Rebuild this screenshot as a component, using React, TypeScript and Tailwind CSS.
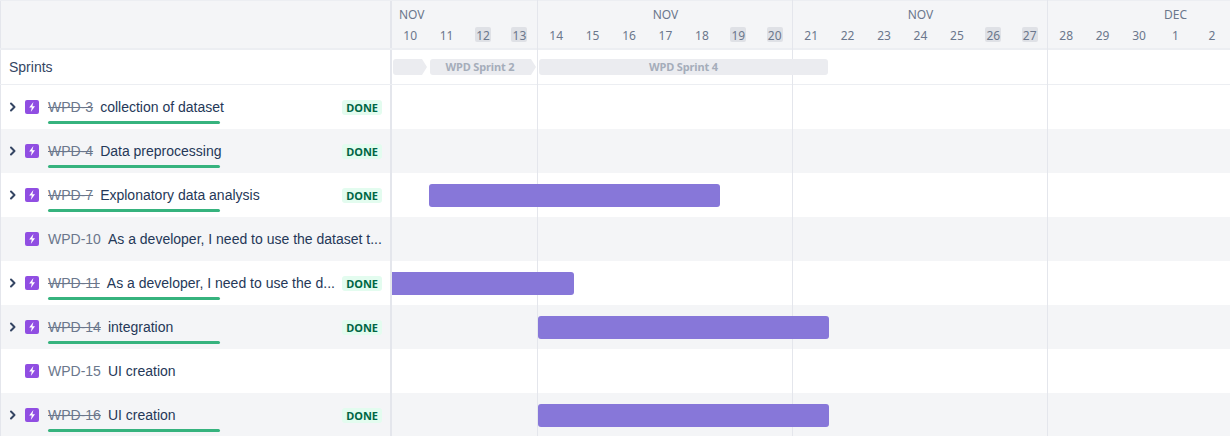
const months = [
  { label: 'NOV', cell: 'w-[146px]', labelCell: 'pl-[7px] text-left', days: ['10', '11', '12', '13'], weekend: ['12', '13'] },
  { label: 'NOV', cell: 'w-[255px]', labelCell: 'text-center', days: ['14', '15', '16', '17', '18', '19', '20'], weekend: ['19', '20'] },
  { label: 'NOV', cell: 'w-[255px]', labelCell: 'text-center', days: ['21', '22', '23', '24', '25', '26', '27'], weekend: ['26', '27'] },
  { label: 'DEC', cell: 'w-[255px]', labelCell: 'text-center', days: ['28', '29', '30', '1', '2'], weekend: [] as string[] },
];

type Task = {
  key: string;
  title: string;
  done: boolean;
  bar?: string;
};

const tasks: Task[] = [
  { key: 'WPD-3', title: 'collection of dataset', done: true },
  { key: 'WPD-4', title: 'Data preprocessing', done: true },
  { key: 'WPD-7', title: 'Explonatory data analysis', done: true, bar: 'ml-[37px] w-[291px] rounded-[3px]' },
  { key: 'WPD-10', title: 'As a developer, I need to use the dataset t...', done: false },
  { key: 'WPD-11', title: 'As a developer, I need to use the d...', done: true, bar: 'ml-0 w-[182px] rounded-r-[3px]' },
  { key: 'WPD-14', title: 'integration', done: true, bar: 'ml-[146px] w-[291px] rounded-[3px]' },
  { key: 'WPD-15', title: 'UI creation', done: false },
  { key: 'WPD-16', title: 'UI creation', done: true, bar: 'ml-[146px] w-[291px] rounded-[3px]' },
];

function StoryIcon() {
  return (
    <span className="flex h-[14px] w-[14px] shrink-0 items-center justify-center rounded-[2px] bg-[#904ee2]">
      <svg width="10" height="12" viewBox="0 0 10 12">
        <path d="M6.4 1 2.2 6.5h2.6l-1 4.5 4.2-5.8H5.4z" fill="#fff" />
      </svg>
    </span>
  );
}

function Chevron() {
  return (
    <svg width="8" height="10" viewBox="0 0 8 10" className="shrink-0">
      <path d="M2 1.5 5.5 5 2 8.5" fill="none" stroke="#344563" strokeWidth="2" strokeLinecap="round" strokeLinejoin="round" />
    </svg>
  );
}

function TaskRow({ task, shaded }: { task: Task; shaded: boolean }) {
  return (
    <div className={`flex h-[44px] ${shaded ? 'bg-[#f4f5f7]' : 'bg-white'}`}>
      <div className="relative flex w-[392px] shrink-0 items-center border-r-2 border-l border-[#e4e6ec] pr-[8px] pl-[8px]">
        <div className="flex w-[16px] justify-start">{task.done && <Chevron />}</div>
        <StoryIcon />
        <div className="ml-[9px] flex min-w-0 flex-1 items-center whitespace-nowrap text-[14px] leading-[20px]">
          <span className={`mr-[7px] text-[#6b778c] ${task.done ? 'line-through' : ''}`}>{task.key}</span>
          <span className="text-[#253858]">{task.title}</span>
        </div>
        {task.done && (
          <span className="mt-[1px] ml-auto h-[15px] rounded-[3px] bg-[#e3fcef] px-[4px] font-['Noto_Sans',sans-serif] text-[11px] leading-[16px] font-bold text-[#006644]">
            DONE
          </span>
        )}
        {task.done && <div className="absolute bottom-[5px] left-[47px] h-[3px] w-[172px] rounded-full bg-[#36b37e]" />}
      </div>
      <div className="flex-1 pt-[11px]">
        {task.bar && <div className={`relative z-10 h-[23px] bg-[#8777d9] ${task.bar}`} />}
      </div>
    </div>
  );
}

export default function App() {
  return (
    <div className="relative h-[436px] w-[1230px] overflow-hidden bg-white font-['Liberation_Sans',sans-serif]">
      <div className="flex h-[50px] border-t border-b-2 border-[#eceef2] bg-[#f4f5f7] font-['Noto_Sans',sans-serif]">
        <div className="w-[392px] shrink-0 border-r-2 border-l border-[#e4e6ec]" />
        <div className="flex flex-1 overflow-hidden">
          {months.map((month, i) => (
            <div key={i} className={`flex shrink-0 flex-col ${month.cell}`}>
              <div className={`pt-[6px] text-[12px] leading-[16px] text-[#6b778c] ${month.labelCell}`}>{month.label}</div>
              <div className="mt-[4px] flex">
                {month.days.map((day) => (
                  <div key={day} className="flex w-[36.43px] justify-center text-[12px] text-[#6b778c]">
                    <span className={`h-[15px] w-[16px] rounded-[2px] text-center leading-[17px] ${month.weekend.includes(day) ? 'bg-[#dfe1e6]' : ''}`}>{day}</span>
                  </div>
                ))}
              </div>
            </div>
          ))}
        </div>
      </div>

      <div className="flex h-[35px] border-b border-[#eceef2] bg-white">
        <div className="flex w-[392px] shrink-0 items-center border-r-2 border-l border-[#e4e6ec] pl-[8px] text-[14px] text-[#344563]">
          Sprints
        </div>
        <div className="flex flex-1 items-center pl-[1px] font-['Noto_Sans',sans-serif] text-[11px] font-bold tracking-[-0.15px] text-[#a5adba]">
          <div className="relative z-10 h-[16px] w-[34px] rounded-l-[3px] bg-[#ebecf0] [clip-path:polygon(0_0,29px_0,100%_50%,29px_100%,0_100%)]" />
          <div className="relative z-10 ml-[3px] flex h-[16px] w-[106px] items-center justify-center rounded-l-[3px] bg-[#ebecf0] pr-[6px] [clip-path:polygon(0_0,101px_0,100%_50%,101px_100%,0_100%)]">
            WPD Sprint 2
          </div>
          <div className="relative z-10 ml-[3px] flex h-[16px] w-[289px] items-center justify-center rounded-[3px] bg-[#ebecf0]">WPD Sprint 4</div>
        </div>
      </div>

      {tasks.map((task, i) => (
        <TaskRow key={task.key} task={task} shaded={i % 2 === 1} />
      ))}

      {/* month separators sit over the row stripes, under the bars */}
      <div className="absolute top-0 bottom-0 left-[537px] w-px bg-[#e4e6ec]" />
      <div className="absolute top-0 bottom-0 left-[792px] w-px bg-[#e4e6ec]" />
      <div className="absolute top-0 bottom-0 left-[1047px] w-px bg-[#e4e6ec]" />
    </div>
  );
}
